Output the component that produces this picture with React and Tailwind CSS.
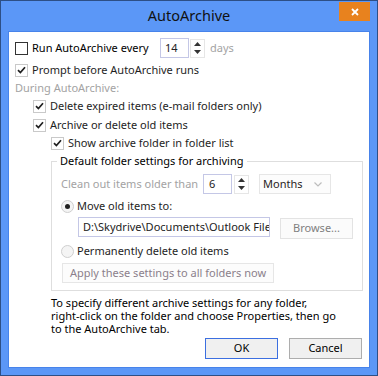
import React from "react";

function Check({ checked }) {
  return (
    <span
      className={`w-[13px] h-[13px] shrink-0 border bg-white flex items-center justify-center ${
        checked ? "border-[#c9c9c9]" : "border-[#333333]"
      }`}
    >
      {checked && (
        <svg width="9" height="8" viewBox="0 0 9 8">
          <path d="M1 4.2 L3.4 6.6 L8 1.2" stroke="#1f1f1f" strokeWidth="1.7" fill="none" />
        </svg>
      )}
    </span>
  );
}

function Radio({ on }) {
  return (
    <span className="w-[13px] h-[13px] shrink-0 rounded-full border border-[#cfcfcf] bg-[#f4f4f4] flex items-center justify-center">
      {on && <span className="w-[5px] h-[5px] rounded-full bg-[#1f1f1f]" />}
    </span>
  );
}

function Spinner() {
  return (
    <span className="w-[15px] h-[19px] shrink-0 border border-[#e6e6e6] bg-white flex flex-col items-center justify-center gap-[4px]">
      <svg width="7" height="4" viewBox="0 0 7 4">
        <path d="M3.5 0 L7 4 L0 4 Z" fill="#333" />
      </svg>
      <svg width="7" height="4" viewBox="0 0 7 4">
        <path d="M0 0 L7 0 L3.5 4 Z" fill="#333" />
      </svg>
    </span>
  );
}

function Row({ className = "", children }) {
  return <div className={`flex items-center whitespace-nowrap ${className}`}>{children}</div>;
}

export default function App() {
  return (
    <div className="w-[378px] h-[376px] bg-[#5b97f7] border border-[#2d4f86] flex flex-col font-['Noto_Sans',sans-serif] text-[11px] text-[#1e1e1e] select-none">
      {/* title bar */}
      <div className="h-[30px] flex items-start px-[7px]">
        <div className="flex-1 h-[30px] flex items-center justify-center pl-[31px] text-[14.5px] text-[#111]">
          AutoArchive
        </div>
        <div className="mt-[1px] w-[31px] h-[19px] bg-[#e8821e] flex items-center justify-center">
          <svg width="8" height="8" viewBox="0 0 8 8">
            <path d="M1 1 L7 7 M7 1 L1 7" stroke="#fff" strokeWidth="1.8" />
          </svg>
        </div>
      </div>

      {/* client area */}
      <div className="mx-[7px] h-[337px] bg-white border border-[#4783ea] flex flex-col">
        <Row className="mt-[6px] h-[20px] pl-[6px]">
          <Check />
          <span className="ml-[4px] w-[128px] text-black">Run AutoArchive every</span>
          <span className="w-[29px] h-[20px] border border-[#c4c7e6] flex items-center pl-[4px] text-[#222]">14</span>
          <span className="ml-[1px]">
            <Spinner />
          </span>
          <span className="ml-[5px] text-[#a3a3a3]">days</span>
        </Row>
        <Row className="mt-[3px] h-[18px] pl-[6px]">
          <Check checked />
          <span className="ml-[4px]">Prompt before AutoArchive runs</span>
        </Row>
        <Row className="h-[18px] pl-[6px] text-[#a3a3a3]">During AutoArchive:</Row>
        <Row className="h-[18px] pl-[24px]">
          <Check checked />
          <span className="ml-[4px]">Delete expired items (e-mail folders only)</span>
        </Row>
        <Row className="mt-[1px] h-[18px] pl-[24px]">
          <Check checked />
          <span className="ml-[4px]">Archive or delete old items</span>
        </Row>
        <Row className="h-[18px] pl-[42px]">
          <Check checked />
          <span className="ml-[4px]">Show archive folder in folder list</span>
        </Row>

        {/* group box */}
        <fieldset className="mt-[1px] ml-[42px] w-[312px] border border-[#dedede]">
          <legend className="ml-[5px] px-[3px] leading-[16px] text-black whitespace-nowrap">
            Default folder settings for archiving
          </legend>
          <div className="pl-[9px] pb-[7px]">
            <Row className="mt-[5px] h-[20px]">
              <span className="w-[142px] text-[#a3a3a3]">Clean out items older than</span>
              <span className="w-[29px] h-[20px] border border-[#c4c7e6] flex items-center pl-[5px] text-[#222]">6</span>
              <span className="ml-[2px]">
                <Spinner />
              </span>
              <span className="ml-[10px] w-[72px] h-[20px] border border-[#e6e6e6] bg-[#fcfcfc] flex items-center pl-[3px] pr-[8px] justify-between text-[#2a1c1c]">
                Months
                <svg width="8" height="5" viewBox="0 0 8 5">
                  <path d="M0.5 0.5 L4 4 L7.5 0.5" stroke="#bdbdbd" strokeWidth="1.2" fill="none" />
                </svg>
              </span>
            </Row>
            <Row className="mt-[2px] h-[20px]">
              <Radio on />
              <span className="ml-[3px]">Move old items to:</span>
            </Row>
            <div className="mt-[1px] flex items-start h-[21px] whitespace-nowrap">
              <span className="ml-[17px] w-[192px] h-[20px] border border-[#c4c7e6] flex items-center pl-[4px] overflow-hidden text-[#222]">
                {"D:\\Skydrive\\Documents\\Outlook File"}
              </span>
              <span className="ml-[10px] mt-[1px] w-[73px] h-[21px] border border-[#e3e3e3] bg-[#fbfbfb] flex items-center justify-center text-[#808080]">
                Browse...
              </span>
            </div>
            <Row className="mt-[3px] h-[20px]">
              <Radio />
              <span className="ml-[3px]">Permanently delete old items</span>
            </Row>
            <div className="mt-[2px] ml-[1px] w-[212px] h-[20px] border border-[#e6e6e6] bg-[#fcfcfc] flex items-center justify-center whitespace-nowrap text-[#8b7f8b]">
              Apply these settings to all folders now
            </div>
          </div>
        </fieldset>

        <p className="mt-[5px] ml-[42px] leading-[13px] text-black whitespace-nowrap">
          To specify different archive settings for any folder,
          <br />
          right-click on the folder and choose Properties, then go
          <br />
          to the AutoArchive tab.
        </p>

        <div className="mt-[3px] flex justify-end gap-[11px] pr-[7px]">
          <span className="w-[73px] h-[21px] border border-[#3c6fe0] bg-[#f0f0f0] flex items-center justify-center text-black">
            OK
          </span>
          <span className="w-[73px] h-[21px] border border-[#adadad] bg-[#f0f0f0] flex items-center justify-center text-black">
            Cancel
          </span>
        </div>
      </div>
    </div>
  );
}
